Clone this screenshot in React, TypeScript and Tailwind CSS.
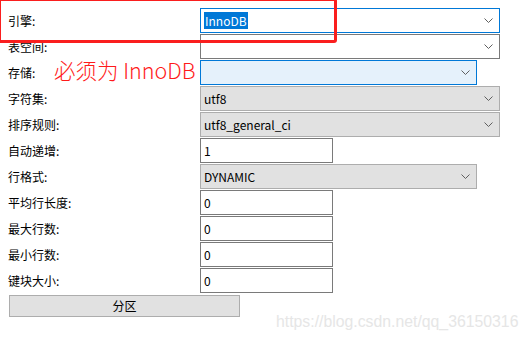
import React from "react";

type Kind = "select" | "input";
interface Field {
  label: string;
  kind: Kind;
  value?: string;
  width: number;
  tone?: "white" | "focus" | "active" | "gray";
}

const fields: Field[] = [
  { label: "引擎:", kind: "select", value: "InnoDB", width: 300, tone: "focus" },
  { label: "表空间:", kind: "select", width: 300, tone: "white" },
  { label: "存储:", kind: "select", width: 277, tone: "active" },
  { label: "字符集:", kind: "select", value: "utf8", width: 300, tone: "gray" },
  { label: "排序规则:", kind: "select", value: "utf8_general_ci", width: 300, tone: "gray" },
  { label: "自动递增:", kind: "input", value: "1", width: 133 },
  { label: "行格式:", kind: "select", value: "DYNAMIC", width: 277, tone: "gray" },
  { label: "平均行长度:", kind: "input", value: "0", width: 133 },
  { label: "最大行数:", kind: "input", value: "0", width: 133 },
  { label: "最小行数:", kind: "input", value: "0", width: 133 },
  { label: "键块大小:", kind: "input", value: "0", width: 133 },
];

const font = { fontFamily: '"Noto Sans CJK SC", "Noto Sans", sans-serif' };

function Chevron() {
  return (
    <svg width="9" height="5" viewBox="0 0 9 5" className="shrink-0">
      <path d="M0.5 0.5 L4.5 4.5 L8.5 0.5" fill="none" stroke="#5f5f5f" strokeWidth="1" />
    </svg>
  );
}

function Control({ f }: { f: Field }) {
  if (f.kind === "input") {
    return (
      <div
        className="h-[25px] border border-[#7a7a7a] bg-white flex items-center pl-[3px] text-[12px] text-black"
        style={{ width: f.width }}
      >
        {f.value}
      </div>
    );
  }
  const tone =
    f.tone === "focus"
      ? "bg-white border-[#0078d7]"
      : f.tone === "active"
      ? "bg-[#e5f1fb] border-[#0078d7]"
      : f.tone === "gray"
      ? "bg-[#e1e1e1] border-[#adadad]"
      : "bg-white border-[#7a7a7a]";
  return (
    <div
      className={`h-[25px] border ${tone} flex items-center justify-between pl-[3px] pr-[6px] text-[12px] text-black`}
      style={{ width: f.width }}
    >
      {f.tone === "focus" ? (
        <span className="bg-[#0078d7] text-white px-[1px] leading-[17px]">{f.value}</span>
      ) : (
        <span>{f.value}</span>
      )}
      <Chevron />
    </div>
  );
}

export default function App() {
  return (
    <div className="relative w-[528px] h-[341px] bg-white overflow-hidden" style={font}>
      <div className="flex flex-col gap-[1px] pt-[8px] pl-[8px]">
        {fields.map((f) => (
          <div key={f.label} className="flex items-center">
            <div className="w-[192px] text-[12px] text-black">{f.label}</div>
            <Control f={f} />
          </div>
        ))}
        <div className="mt-[1px] ml-[1px] w-[231px] h-[22px] bg-[#e1e1e1] border border-[#adadad] flex items-center justify-center text-[12px] text-black">
          分区
        </div>
      </div>

      <div className="absolute left-[-2px] top-[-2px] w-[339px] h-[45px] border-[3px] border-[#fa1e1e] rounded-[3px]" />

      <div className="absolute left-[54px] top-[57px] text-[21.5px] leading-[26px] font-light text-[#ff1a1a]">
        必须为 InnoDB
      </div>

      <div
        className="absolute left-[276px] top-[312px] text-[15.8px] leading-[20px] text-[#e6e6e6]"
        style={{ fontFamily: '"Liberation Sans", Arial, sans-serif' }}
      >
        https://blog.csdn.net/qq_36150316
      </div>
    </div>
  );
}
